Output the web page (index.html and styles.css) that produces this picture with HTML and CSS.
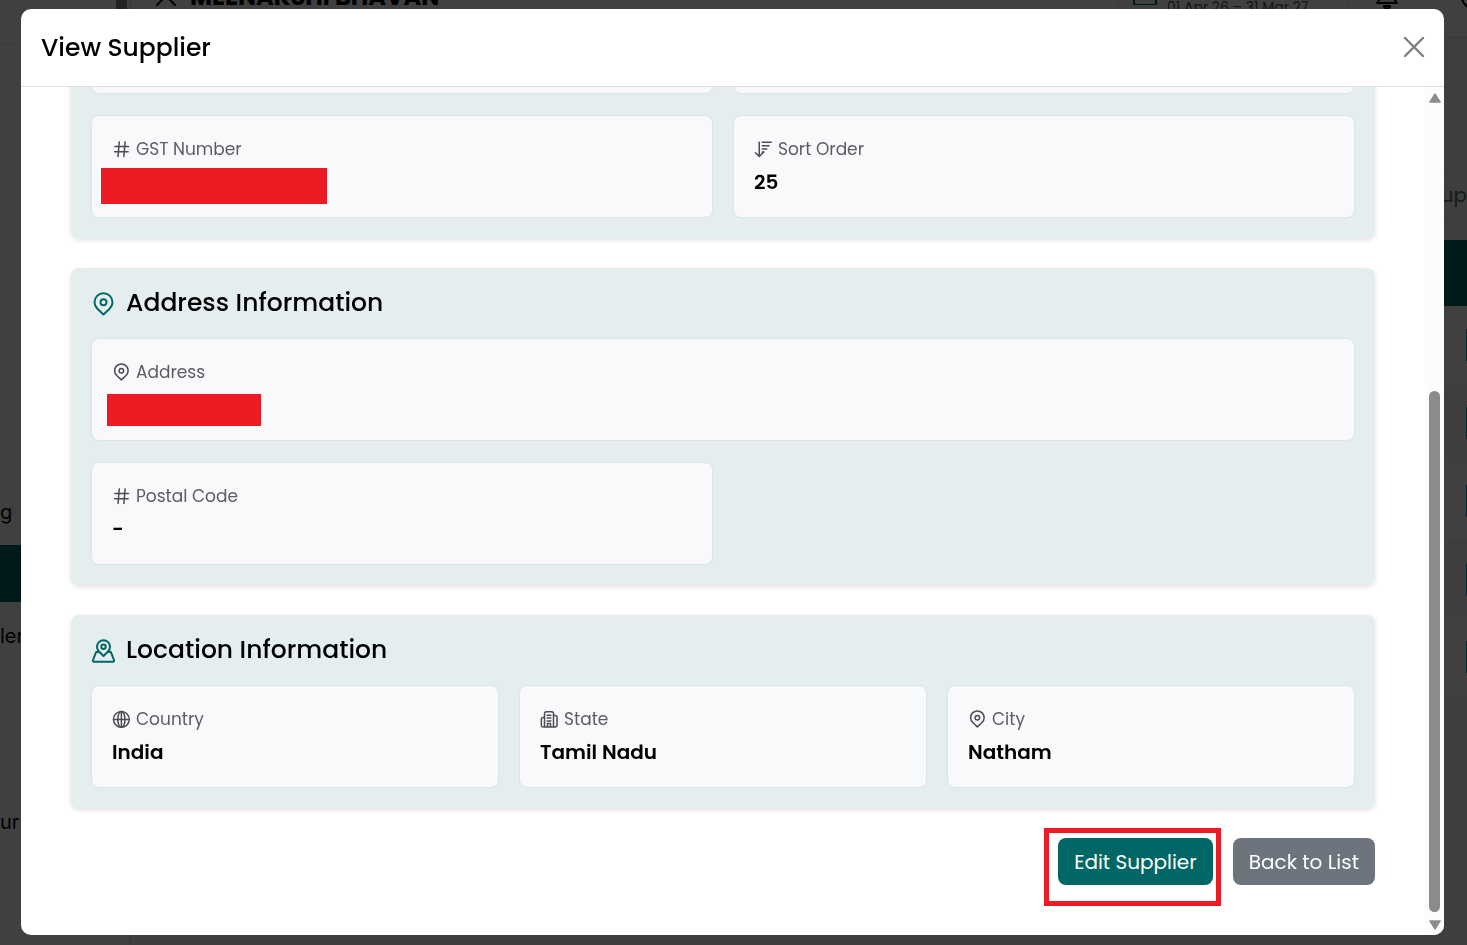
FILE: index.html
```html
<!DOCTYPE html>
<html lang="en">
<head>
    <meta charset="UTF-8">
    <meta name="viewport" content="width=device-width, initial-scale=1.0">
    <title>View Supplier</title>
    <link rel="stylesheet" href="styles.css">
</head>
<body>
    <!-- Icons -->
    <svg class="icon-defs" aria-hidden="true">
        <symbol id="icon-pin" viewBox="0 0 24 24">
            <path d="M12.500 22.500 6.400 16.700C4.300 14.600 3.500 12.400 3.500 10.200a9 9 0 0 1 18 0c0 2.200-.8 4.400-2.900 6.500z"/>
            <circle cx="12.500" cy="10.200" r="3"/>
        </symbol>
        <symbol id="icon-hash" viewBox="0 0 24 24">
            <path d="M4 8.500h18M3.500 15.800h18M9.700 2.500 8 22M17.500 2.500 15.800 22"/>
        </symbol>
        <symbol id="icon-sort" viewBox="0 0 24 24">
            <path d="M7 3v18M2 17l5 5 5-5M11 3h12M11 7.500h9M11 12h6M11 16h2.500"/>
        </symbol>
        <symbol id="icon-globe" viewBox="0 0 24 24">
            <circle cx="12.500" cy="12.500" r="10.500"/>
            <ellipse cx="12.500" cy="12.500" rx="4.800" ry="10.500"/>
            <path d="M2 12.500h21M12.500 2v21"/>
        </symbol>
        <symbol id="icon-building" viewBox="0 0 24 24">
            <path d="M6 22.500V4.500a2.200 2.200 0 0 1 2.200-2.200h7.600A2.200 2.200 0 0 1 18 4.500v18M6 10H4a2.200 2.200 0 0 0-2.200 2.200v8.100A2.200 2.200 0 0 0 4 22.500h16.500a2.200 2.200 0 0 0 2.200-2.200V9.500a2.200 2.200 0 0 0-2.200-2.200H18M9.500 7h5M9.500 10.800h5M9.500 14.500h5M10 22v-4h4v4"/>
        </symbol>
        <symbol id="icon-map-pin" viewBox="0 0 24 24">
            <path d="M12.500 17 8.200 12.700C6.800 11.300 6 9.500 6 7.700a6.500 6.500 0 0 1 13 0c0 1.800-.8 3.600-2.200 5z"/>
            <circle cx="12.500" cy="7.700" r="2.200"/>
            <path d="M7.300 13H5.100L2 21.200c-.3.900.1 1.500 1 1.500h19c.9 0 1.300-.6 1-1.500L19.900 13h-2.200"/>
        </symbol>
        <symbol id="icon-close" viewBox="0 0 24 24">
            <path d="M3 2l18 18M21 2 3 20"/>
        </symbol>
        <symbol id="icon-calendar" viewBox="0 0 24 24">
            <rect x="1" y="4" width="22" height="20" rx="2"/>
            <path d="M1 9h22M7 1v4M17 1v4"/>
        </symbol>
        <symbol id="icon-bell" viewBox="0 0 24 24">
            <path d="M2 18h20l-3-4V9A7 7 0 0 0 5 9v5zM9 21a3 2.500 0 0 0 6 0z"/>
        </symbol>
        <symbol id="icon-user" viewBox="0 0 24 24">
            <circle cx="12" cy="12" r="11"/>
        </symbol>
    </svg>

    <!-- Page behind the dialog -->
    <div class="app" aria-hidden="true">
        <div class="sidebar">
            <div class="brand"></div>
            <div class="nav">
                <span class="nav-item">g</span>
                <span class="nav-item active"></span>
                <span class="nav-item">ler</span>
                <span class="nav-item"></span>
                <span class="nav-item"></span>
                <span class="nav-item">urr</span>
            </div>
        </div>
        <div class="sidebar-track"><div class="sidebar-thumb"></div></div>
        <div class="main">
            <div class="topbar">
                <svg class="icon icon-lg"><use href="#icon-close"/></svg>
                <span class="company">MEENAKSHI BHAVAN</span>
                <div class="year-box">
                    <svg class="icon icon-lg year-icon"><use href="#icon-calendar"/></svg>
                    <span class="year">01 Apr 26 – 31 Mar 27</span>
                </div>
                <svg class="icon icon-lg"><use href="#icon-bell"/></svg>
                <svg class="icon icon-user"><use href="#icon-user"/></svg>
            </div>
            <div class="list">
                <div class="list-search">Sup</div>
                <div class="list-head"></div>
                <div class="list-row"><span class="row-action"></span></div>
                <div class="list-row"><span class="row-action"></span></div>
                <div class="list-row"><span class="row-action"></span></div>
                <div class="list-row"><span class="row-action"></span></div>
                <div class="list-row"><span class="row-action"></span></div>
            </div>
        </div>
    </div>

    <!-- Dialog -->
    <div class="backdrop">
        <div class="modal" role="dialog" aria-modal="true" aria-labelledby="modal-title">
            <div class="modal-header">
                <h1 id="modal-title">View Supplier</h1>
                <button class="close-btn" type="button" aria-label="Close">
                    <svg class="icon icon-close"><use href="#icon-close"/></svg>
                </button>
            </div>

            <div class="modal-body">
                <div class="content">
                    <!-- Basic details, scrolled up -->
                    <section class="section">
                        <div class="fields two">
                            <div class="field"></div>
                            <div class="field"></div>
                            <div class="field">
                                <div class="label"><svg class="icon"><use href="#icon-hash"/></svg>GST Number</div>
                                <div class="value"><span class="redacted redacted-gst"></span></div>
                            </div>
                            <div class="field">
                                <div class="label"><svg class="icon"><use href="#icon-sort"/></svg>Sort Order</div>
                                <div class="value">25</div>
                            </div>
                        </div>
                    </section>

                    <section class="section">
                        <h2><svg class="icon icon-lg"><use href="#icon-pin"/></svg>Address Information</h2>
                        <div class="fields two">
                            <div class="field wide">
                                <div class="label"><svg class="icon"><use href="#icon-pin"/></svg>Address</div>
                                <div class="value"><span class="redacted redacted-address"></span></div>
                            </div>
                            <div class="field">
                                <div class="label"><svg class="icon"><use href="#icon-hash"/></svg>Postal Code</div>
                                <div class="value">-</div>
                            </div>
                        </div>
                    </section>

                    <section class="section">
                        <h2><svg class="icon icon-lg"><use href="#icon-map-pin"/></svg>Location Information</h2>
                        <div class="fields three">
                            <div class="field">
                                <div class="label"><svg class="icon"><use href="#icon-globe"/></svg>Country</div>
                                <div class="value">India</div>
                            </div>
                            <div class="field">
                                <div class="label"><svg class="icon"><use href="#icon-building"/></svg>State</div>
                                <div class="value">Tamil Nadu</div>
                            </div>
                            <div class="field">
                                <div class="label"><svg class="icon"><use href="#icon-pin"/></svg>City</div>
                                <div class="value">Natham</div>
                            </div>
                        </div>
                    </section>

                    <div class="actions">
                        <div class="highlighted">
                            <button class="btn btn-primary" type="button">Edit Supplier</button>
                            <span class="highlight"></span>
                        </div>
                        <button class="btn btn-secondary" type="button">Back to List</button>
                    </div>
                </div>

                <div class="scrollbar" aria-hidden="true">
                    <svg class="arrow" viewBox="0 0 12 10"><path d="M6 1.500 10.500 8.500h-9z"/></svg>
                    <div class="track"><div class="thumb"></div></div>
                    <svg class="arrow" viewBox="0 0 12 10"><path d="M6 8.500 1.500 1.500h9z"/></svg>
                </div>
            </div>
        </div>
    </div>
</body>
</html>
```
FILE: styles.css
```css
/* Global Reset */
* {
    margin: 0;
    padding: 0;
    box-sizing: border-box;
}

body {
    font-family: 'Poppins', 'Inter', sans-serif;
    color: #000;
    background-color: #fff;
    overflow: hidden;
}

/* Icons */
.icon-defs {
    position: absolute;
    width: 0;
    height: 0;
}

.icon {
    width: 18px;
    height: 18px;
    flex: none;
    fill: none;
    stroke: currentColor;
    stroke-width: 2;
    stroke-linecap: round;
    stroke-linejoin: round;
}

.icon-lg {
    width: 24px;
    height: 24px;
}

/* Page behind the dialog */
.app {
    display: flex;
    height: 100vh;
    overflow: hidden;
}

.sidebar {
    width: 116px;
    font-family: 'Inter', sans-serif;
    font-size: 20px;
}

.sidebar-track {
    width: 15px;
}

.sidebar-thumb {
    width: 11px;
    height: 60%;
    background-color: #8b8b8b;
}

.brand {
    height: 45px;
    border-bottom: 1px solid #dee2e6;
}

.nav {
    display: flex;
    flex-direction: column;
    gap: 5px;
    padding-top: 438px;
}

.nav-item {
    height: 57px;
    line-height: 58px;
}

.nav-item.active {
    background-color: #006766;
}

.main {
    flex: 1;
    background-color: #f8f8f8;
    box-shadow: 0 0 4px rgba(0, 0, 0, 0.3);
}

.topbar {
    display: flex;
    align-items: center;
    height: 82px;
    margin-top: -44px;
    padding-left: 23px;
    background-color: #fff;
    border-bottom: 1px solid #dee2e6;
}

.company {
    flex: 1;
    padding-left: 12px;
    font-size: 24px;
    font-weight: 700;
}

.year-box {
    display: flex;
    align-items: flex-end;
    gap: 10px;
    width: 230px;
    height: 60px;
    margin-right: 27px;
    padding: 0 14px 8px;
    border: 1px solid #dee2e6;
    color: #555;
    font-size: 14px;
}

.year-icon {
    align-self: center;
    color: #006766;
}

.icon-user {
    margin: 0 -18px 0 62px;
    width: 24px;
    height: 24px;
}

.list {
    padding-top: 134px;
}

.list-search {
    height: 47px;
    line-height: 45px;
    margin-bottom: 21px;
    border: solid #dee2e6;
    border-width: 1px 0;
    color: #666;
    font-size: 20px;
    text-align: right;
}

.list-head {
    height: 66px;
    background-color: #006766;
}

.list-row {
    display: flex;
    align-items: center;
    justify-content: flex-end;
    height: 78px;
}

.list-row:nth-child(odd) {
    background-color: #fff;
}

.row-action {
    width: 1px;
    height: 32px;
    background-color: #0098a8;
}

/* Dialog */
.backdrop {
    position: fixed;
    inset: 0;
    display: flex;
    padding: 9px 23px 10px 21px;
    background-color: rgba(0, 0, 0, 0.75);
}

.modal {
    flex: 1;
    display: flex;
    flex-direction: column;
    background-color: #fff;
    border-radius: 10px;
    overflow: hidden;
}

.modal-header {
    display: flex;
    align-items: center;
    justify-content: space-between;
    height: 78px;
    padding: 0 18px 0 20px;
    border-bottom: 1px solid #dee2e6;
}

h1,
h2 {
    font-size: 25px;
    font-weight: 500;
    line-height: 30px;
}

.close-btn {
    display: flex;
    border: none;
    background: none;
    color: #7f7f7f;
    cursor: pointer;
}

.icon-close {
    width: 24px;
    height: 24px;
    stroke-width: 2.400;
}

.modal-body {
    flex: 1;
    display: flex;
    min-height: 0;
}

/* Content is kept at the end of its scroll */
.content {
    flex: 1;
    display: flex;
    flex-direction: column;
    justify-content: flex-end;
    gap: 30px;
    padding: 0 50px 50px;
    overflow: hidden;
}

/* Sections */
.section {
    flex: none;
    padding: 20px;
    background-color: #e5eeef;
    border-radius: 8px;
    box-shadow: 0 2px 5px rgba(0, 0, 0, 0.12);
}

.section h2 {
    display: flex;
    align-items: center;
    gap: 11px;
    margin-bottom: 20px;
}

.section h2 .icon {
    margin-top: 2px;
    color: #006766;
    stroke-width: 2;
}

.fields {
    display: grid;
    gap: 21px 20px;
}

.two {
    grid-template-columns: repeat(2, 1fr);
}

.three {
    grid-template-columns: repeat(3, 1fr);
}

.field {
    min-height: 103px;
    padding: 20px;
    background-color: #f8f9fb;
    border: 1px solid #dde4e6;
    border-radius: 8px;
}

.wide {
    grid-column: 1 / -1;
}

.label {
    display: flex;
    align-items: center;
    gap: 6px;
    margin-bottom: 5px;
    color: #5c5d60;
    font-size: 17px;
    line-height: 26px;
}

.label .icon {
    color: #4c4d50;
}

.value {
    position: relative;
    height: 30px;
    font-size: 20px;
    font-weight: 600;
    line-height: 30px;
}

/* Masked values */
.redacted {
    position: absolute;
    background-color: #ed1c24;
}

.redacted-gst {
    top: 1px;
    left: -11px;
    width: 226px;
    height: 36px;
}

.redacted-address {
    top: 4px;
    left: -5px;
    width: 154px;
    height: 32px;
}

/* Buttons */
.actions {
    display: flex;
    justify-content: flex-end;
    gap: 20px;
}

.btn {
    height: 47px;
    padding: 0 16px;
    border: none;
    border-radius: 8px;
    color: #fff;
    font-family: inherit;
    font-size: 20px;
    font-weight: 400;
    cursor: pointer;
}

.btn-primary {
    background-color: #006766;
}

.btn-secondary {
    background-color: #6c757d;
}

.highlighted {
    position: relative;
}

.highlight {
    position: absolute;
    inset: -10px -8px -21px -14px;
    border: 5px solid #ed1c24;
    pointer-events: none;
}

/* Scrollbar */
.scrollbar {
    display: flex;
    flex-direction: column;
    align-items: center;
    width: 19px;
    padding: 5px 0 4px;
    background-color: #fcfcfc;
}

.arrow {
    width: 14px;
    height: 12px;
    fill: #8b8b8b;
    stroke: #8b8b8b;
    stroke-width: 1;
    stroke-linejoin: round;
}

.track {
    flex: 1;
    display: flex;
    align-items: flex-end;
    padding: 6px 0 7px;
}

.thumb {
    width: 11px;
    height: 65%;
    border-radius: 6px;
    background-color: #8b8b8b;
}
```
